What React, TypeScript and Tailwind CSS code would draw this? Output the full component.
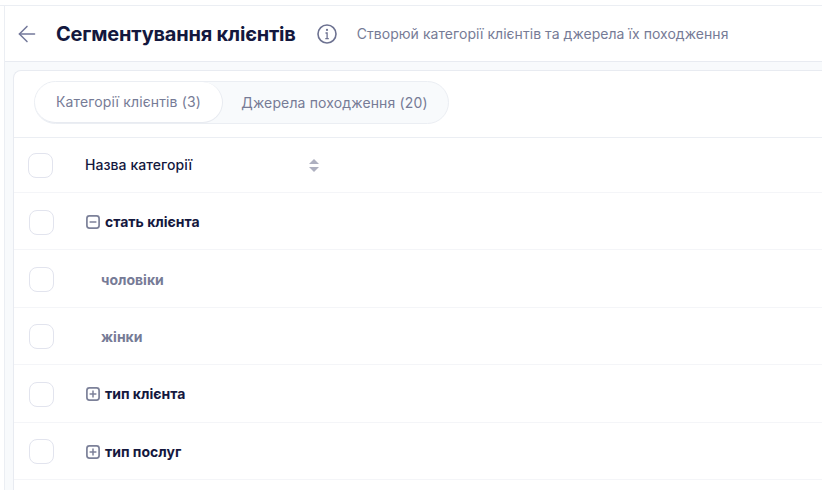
import { ArrowLeft } from "lucide-react";

const rows = [
  { name: "стать клієнта", icon: "minus" },
  { name: "чоловіки", icon: "child" },
  { name: "жінки", icon: "child" },
  { name: "тип клієнта", icon: "plus" },
  { name: "тип послуг", icon: "plus" },
];

function ToggleIcon({ type }: { type: string }) {
  return (
    <svg width="14" height="14" viewBox="0 0 14 14" fill="none" className="shrink-0">
      <rect x="0.9" y="0.9" width="12.2" height="12.2" rx="2.5" stroke="#7c8199" strokeWidth="1.7" />
      <path d="M3.6 7h6.8" stroke="#7c8199" strokeWidth="1.5" />
      {type === "plus" && <path d="M7 3.6v6.8" stroke="#7c8199" strokeWidth="1.5" />}
    </svg>
  );
}

function InfoIcon() {
  return (
    <svg width="20" height="20" viewBox="0 0 20 20" fill="none" className="ml-[21px] shrink-0">
      <circle cx="10" cy="10" r="9" stroke="#6d7291" strokeWidth="1.6" />
      <circle cx="10" cy="5.9" r="1.1" fill="#6d7291" />
      <path d="M8.5 9h1.6v5.4M8.3 14.6h3.5" stroke="#6d7291" strokeWidth="1.3" />
    </svg>
  );
}

function Checkbox() {
  return <div className="h-[25px] w-[25px] shrink-0 rounded-lg border border-[#e2e4ee] bg-white" />;
}

export default function App() {
  return (
    <div className="flex h-[490px] w-[822px] flex-col overflow-hidden bg-white font-['Inter',sans-serif]">
      <div className="h-[6px] shrink-0 border-b border-[#ebeef3]" />
      <div className="flex min-h-0 flex-1 pl-1">
        <div className="flex min-w-0 flex-1 flex-col border-l border-[#ebeef3] bg-[#f8fafc]">
          {/* Page header */}
          <header className="flex h-[56px] shrink-0 items-center border-b border-[#e8ebf1] bg-white pl-[9px]">
            <ArrowLeft size={26} strokeWidth={1.4} className="shrink-0 text-[#73789a]" />
            <h1 className="ml-4 text-xl font-bold tracking-[-0.2px] whitespace-nowrap text-[#14183e]">Сегментування клієнтів</h1>
            <InfoIcon />
            <p className="ml-5 text-sm tracking-[0.05px] whitespace-nowrap text-[#767b96]">
              Створюй категорії клієнтів та джерела їх походження
            </p>
          </header>

          {/* Card */}
          <div className="mt-2 ml-2 flex min-h-0 flex-1 flex-col rounded-tl-lg border-t border-l border-[#e8ebf1] bg-white">
            <div className="flex h-[67px] shrink-0 items-start border-b border-[#ebeef3] pt-[10px] pl-5">
              <div className="flex h-[43px] w-[415px] rounded-full border border-[#ebeef3] bg-[#f8fafc] text-sm tracking-[0.14px] text-[#767b96]">
                <div className="flex w-[188px] items-center justify-center rounded-full border-r border-b border-[#e8ebf1] bg-white">
                  Категорії клієнтів (3)
                </div>
                <div className="flex flex-1 items-center justify-center pr-[2px]">Джерела походження (20)</div>
              </div>
            </div>

            <div className="flex h-[55px] shrink-0 items-center border-b border-[#f4f5f8] pl-[14px]">
              <Checkbox />
              <span className="ml-[32px] w-[224px] text-sm font-medium tracking-[0.06px] text-[#14183e]">Назва категорії</span>
              <svg width="10" height="13" viewBox="0 0 10 13" className="shrink-0">
                <path d="M5 0l5 5H0z" fill="#aeb0c0" />
                <path d="M5 13l5-5H0z" fill="#aeb0c0" />
              </svg>
            </div>

            {rows.map((row) => (
              <div key={row.name} className="flex h-[57.4px] shrink-0 items-center border-b border-[#f4f5f8] pt-[2px] pl-[15px]">
                <Checkbox />
                {row.icon === "child" ? (
                  <span className="ml-[47px] text-sm font-bold text-[#767b96]">{row.name}</span>
                ) : (
                  <div className="ml-[32px] flex items-center gap-[5px]">
                    <ToggleIcon type={row.icon} />
                    <span className="text-sm font-bold text-[#14183e]">{row.name}</span>
                  </div>
                )}
              </div>
            ))}
          </div>
        </div>
      </div>
    </div>
  );
}
